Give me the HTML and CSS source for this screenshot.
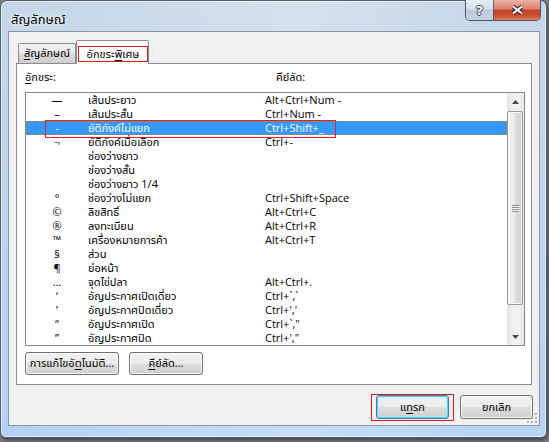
FILE: index.html
```html
<!DOCTYPE html>
<html lang="th">
<head>
<meta charset="utf-8">
<title>สัญลักษณ์</title>
<link rel="stylesheet" href="styles.css">
</head>
<body>
<div class="window">
  <div class="titlebar">
    <span class="title">สัญลักษณ์</span>
    <div class="caption">
      <span class="cap cap-help">?</span>
      <span class="cap cap-close">
        <svg width="13" height="10" viewBox="0 0 13 10">
          <path d="M2 1.5 L11 8.5 M11 1.5 L2 8.5" stroke="#3a2626" stroke-width="4.2" fill="none"/>
          <path d="M2 1.5 L11 8.5 M11 1.5 L2 8.5" stroke="#ffffff" stroke-width="2.2" fill="none"/>
        </svg>
      </span>
    </div>
  </div>

  <div class="client">
    <div class="tabs">
      <div class="tab"><u>สั</u>ญลักษณ์</div>
      <div class="tab tab-active"><span class="mark tab-mark">อักขระ<u>พิ</u>เศษ</span></div>
    </div>

    <div class="panel">
      <div class="list-head"><span><u>อั</u>กขระ:</span><span>คีย์ลัด:</span></div>

      <div class="listbox">
        <div class="rows">
          <div class="row"><span class="sym">—</span><span>เส้นประยาว</span><span>Alt+Ctrl+Num -</span></div>
          <div class="row"><span class="sym">–</span><span>เส้นประสั้น</span><span>Ctrl+Num -</span></div>
          <div class="row row-selected"><span class="sym">-</span><span>ยัติภังค์ไม่แยก</span><span>Ctrl+Shift+_</span><span class="mark row-mark"></span></div>
          <div class="row"><span class="sym">¬</span><span>ยัติภังค์เมื่อเลือก</span><span>Ctrl+-</span></div>
          <div class="row"><span class="sym"></span><span>ช่องว่างยาว</span><span></span></div>
          <div class="row"><span class="sym"></span><span>ช่องว่างสั้น</span><span></span></div>
          <div class="row"><span class="sym"></span><span>ช่องว่างยาว 1/4</span><span></span></div>
          <div class="row"><span class="sym">°</span><span>ช่องว่างไม่แยก</span><span>Ctrl+Shift+Space</span></div>
          <div class="row"><span class="sym">©</span><span>ลิขสิทธิ์</span><span>Alt+Ctrl+C</span></div>
          <div class="row"><span class="sym">®</span><span>ลงทะเบียน</span><span>Alt+Ctrl+R</span></div>
          <div class="row"><span class="sym">™</span><span>เครื่องหมายการค้า</span><span>Alt+Ctrl+T</span></div>
          <div class="row"><span class="sym">§</span><span>ส่วน</span><span></span></div>
          <div class="row"><span class="sym">¶</span><span>ย่อหน้า</span><span></span></div>
          <div class="row"><span class="sym">…</span><span>จุดไข่ปลา</span><span>Alt+Ctrl+.</span></div>
          <div class="row"><span class="sym">‘</span><span>อัญประกาศเปิดเดี่ยว</span><span>Ctrl+`,`</span></div>
          <div class="row"><span class="sym">’</span><span>อัญประกาศปิดเดี่ยว</span><span>Ctrl+','</span></div>
          <div class="row"><span class="sym">“</span><span>อัญประกาศเปิด</span><span>Ctrl+`,"</span></div>
          <div class="row"><span class="sym">”</span><span>อัญประกาศปิด</span><span>Ctrl+',"</span></div>
        </div>

        <div class="scrollbar">
          <div class="sb-btn">
            <svg width="7" height="4" viewBox="0 0 7 4"><path d="M0 4 L3.5 0 L7 4 Z" fill="#4a4a4a"/></svg>
          </div>
          <div class="sb-thumb"><span class="grip"></span></div>
          <div class="sb-track"></div>
          <div class="sb-btn">
            <svg width="7" height="4" viewBox="0 0 7 4"><path d="M0 0 L3.5 4 L7 0 Z" fill="#4a4a4a"/></svg>
          </div>
        </div>
      </div>

      <div class="panel-buttons">
        <button class="btn btn-auto">การแก้ไขอั<u>ต</u>โนมัติ...</button>
        <button class="btn btn-keys"><u>คี</u>ย์ลัด...</button>
      </div>
    </div>

    <div class="footer">
      <span class="mark btn-mark"><button class="btn btn-default">แ<u>ท</u>รก</button></span>
      <button class="btn btn-cancel">ยกเลิก</button>
    </div>

    <svg class="size-grip" width="11" height="11" viewBox="0 0 11 11">
      <g fill="#ffffff">
        <rect x="9" y="1" width="2" height="2"/><rect x="9" y="5" width="2" height="2"/><rect x="5" y="5" width="2" height="2"/>
        <rect x="9" y="9" width="2" height="2"/><rect x="5" y="9" width="2" height="2"/><rect x="1" y="9" width="2" height="2"/>
      </g>
      <g fill="#a9b0b8">
        <rect x="8" y="0" width="2" height="2"/><rect x="8" y="4" width="2" height="2"/><rect x="4" y="4" width="2" height="2"/>
        <rect x="8" y="8" width="2" height="2"/><rect x="4" y="8" width="2" height="2"/><rect x="0" y="8" width="2" height="2"/>
      </g>
    </svg>
  </div>
</div>
</body>
</html>
```

FILE: styles.css
```css
* { box-sizing: border-box; }

html, body { margin: 0; padding: 0; }

body {
  width: 549px;
  height: 442px;
  overflow: hidden;
  background: #7c8087;
  font-family: "Open Sans", "Noto Sans", "Noto Sans Thai", Tahoma, Loma, sans-serif;
  font-size: 11px;
  color: #000;
}

u { text-decoration: underline; text-underline-offset: 2px; }

/* ---------- window frame ---------- */
.window {
  width: 547px;
  height: 438px;
  border: 1px solid #56606c;
  border-radius: 7px 7px 6px 6px;
  padding: 0 6px 11px 7px;
  display: flex;
  flex-direction: column;
  background:
    linear-gradient(90deg, rgba(255,255,255,0) 0%, rgba(255,255,255,.28) 55%, rgba(255,255,255,.05) 90%),
    linear-gradient(180deg, #c5d5e7 0%, #bfd5ec 40%, #b3d1f1 100%);
  box-shadow: inset 0 0 0 1px rgba(255,255,255,.55), 1px 2px 4px rgba(0,0,0,.55);
}

.titlebar {
  height: 30px;
  flex-shrink: 0;
  display: flex;
  align-items: flex-start;
}

.title {
  margin: 10px 0 0 3px;
  font-size: 13px;
  line-height: 16px;
  text-shadow: 0 0 6px #fff, 0 0 3px #fff;
}

.caption {
  margin: -1px -1px 0 auto;
  height: 21px;
  display: flex;
  border: 1px solid #4b5663;
  border-top: 0;
  border-radius: 0 0 5px 5px;
  overflow: hidden;
}

.cap {
  height: 100%;
  display: flex;
  align-items: center;
  justify-content: center;
}

.cap-help {
  width: 28px;
  border-right: 1px solid #56616e;
  background: linear-gradient(#e6edf5 0%, #d6e0eb 45%, #bccbdc 50%, #c4d4e5 100%);
  color: #fff;
  font: bold 13px "DejaVu Sans", sans-serif;
  text-shadow: 1px 0 0 #3d4753, -1px 0 0 #3d4753, 0 1px 0 #3d4753, 0 -1px 0 #3d4753;
}

.cap-close {
  width: 46px;
  background: linear-gradient(#ebb4a9 0%, #dc7f6d 45%, #c5432b 50%, #c84a31 75%, #e07c57 100%);
}

/* ---------- client area ---------- */
.client {
  flex: 1;
  position: relative;
  display: flex;
  flex-direction: column;
  background: #f0f0f0;
  border: 1px solid #8796a8;
}

.tabs {
  height: 31px;
  flex-shrink: 0;
  display: flex;
  align-items: flex-end;
  padding-left: 9px;
}

.tab {
  width: 58px;
  height: 20px;
  border: 1px solid #898c95;
  border-bottom: 0;
  border-radius: 2px 2px 0 0;
  background: linear-gradient(#f2f2f2 0%, #ebebeb 50%, #dddddd 50%, #cfcfcf 100%);
  text-align: center;
  line-height: 18px;
  white-space: nowrap;
}

.tab-active {
  position: relative;
  z-index: 1;
  width: 73px;
  height: 24px;
  margin-bottom: -1px;
  background: #fff;
  padding: 5px 0 0 1px;
  line-height: 14px;
  text-align: left;
}

.mark { border: 1px solid #e3151d; }

.tab-mark {
  display: block;
  width: 70px;
  height: 16px;
  text-align: center;
}

.panel {
  height: 322px;
  margin: 0 7px;
  display: flex;
  flex-direction: column;
  background: #fff;
  border: 1px solid #898c95;
}

.list-head {
  height: 28px;
  flex-shrink: 0;
  display: grid;
  grid-template-columns: 251px auto;
  padding: 6px 0 0 8px;
  line-height: 14px;
}

.listbox {
  height: 254px;
  flex-shrink: 0;
  margin: 0 6px 0 8px;
  display: flex;
  border: 1px solid #828790;
}

.rows { flex: 1; }

.row {
  position: relative;
  height: 14px;
  line-height: 14px;
  display: grid;
  grid-template-columns: 62px 177px 1fr;
  white-space: nowrap;
}

.sym { text-align: center; }

.row-selected {
  z-index: 1;
  background: #3399ff;
  color: #fff;
  outline: 1px dotted #d0781e;
  outline-offset: -1px;
}

.row-mark {
  position: absolute;
  z-index: 2;
  left: 19px;
  top: -1px;
  width: 291px;
  height: 18px;
  border-color: #ee1c24;
}

/* ---------- scrollbar ---------- */
.scrollbar {
  width: 17px;
  display: flex;
  flex-direction: column;
  background: linear-gradient(90deg, #e4e4e4 0%, #efefef 25%, #f1f1f1 70%, #e8e8e8 100%);
}

.sb-btn {
  height: 17px;
  flex-shrink: 0;
  display: flex;
  align-items: center;
  justify-content: center;
}

.sb-thumb {
  height: 194px;
  margin: 1px 1px 0 0;
  flex-shrink: 0;
  display: flex;
  align-items: center;
  justify-content: center;
  border: 1px solid #979797;
  border-radius: 2px;
  background: linear-gradient(90deg, #f4f4f4 0%, #ebebeb 45%, #dcdcdc 55%, #d2d2d2 100%);
  box-shadow: inset 0 0 0 1px rgba(255,255,255,.7);
}

.grip {
  width: 7px;
  height: 7px;
  background: repeating-linear-gradient(180deg, #8c8c8c 0 1px, #f8f8f8 1px 2px);
}

.sb-track { flex: 1; }

/* ---------- buttons ---------- */
.btn {
  font: inherit;
  color: #000;
  height: 23px;
  padding: 0;
  border: 1px solid #707070;
  border-radius: 3px;
  background: linear-gradient(#f2f2f2 0%, #ebebeb 50%, #dddddd 50%, #cfcfcf 100%);
  box-shadow: inset 0 0 0 1px rgba(255,255,255,.85);
  white-space: nowrap;
}

.panel-buttons {
  margin-top: 6px;
  display: flex;
  gap: 10px;
  padding-left: 8px;
}

.btn-auto { width: 94px; }
.btn-keys { width: 74px; }

.footer {
  flex: 1;
  display: flex;
  justify-content: flex-end;
  align-items: flex-start;
  gap: 6px;
  padding: 9px 6px 0 0;
}

.btn-mark {
  display: flex;
  padding: 0 4px 1px;
}

.btn-default {
  width: 73px;
  height: 24px;
  border-color: #3c7fb1;
  box-shadow: inset 0 0 0 1px #5fd0f7, inset 0 0 0 2px rgba(180,235,252,.6);
}

.btn-cancel {
  width: 73px;
  height: 24px;
  margin-top: 1px;
}

.size-grip {
  position: absolute;
  right: 1px;
  bottom: 1px;
}
```
